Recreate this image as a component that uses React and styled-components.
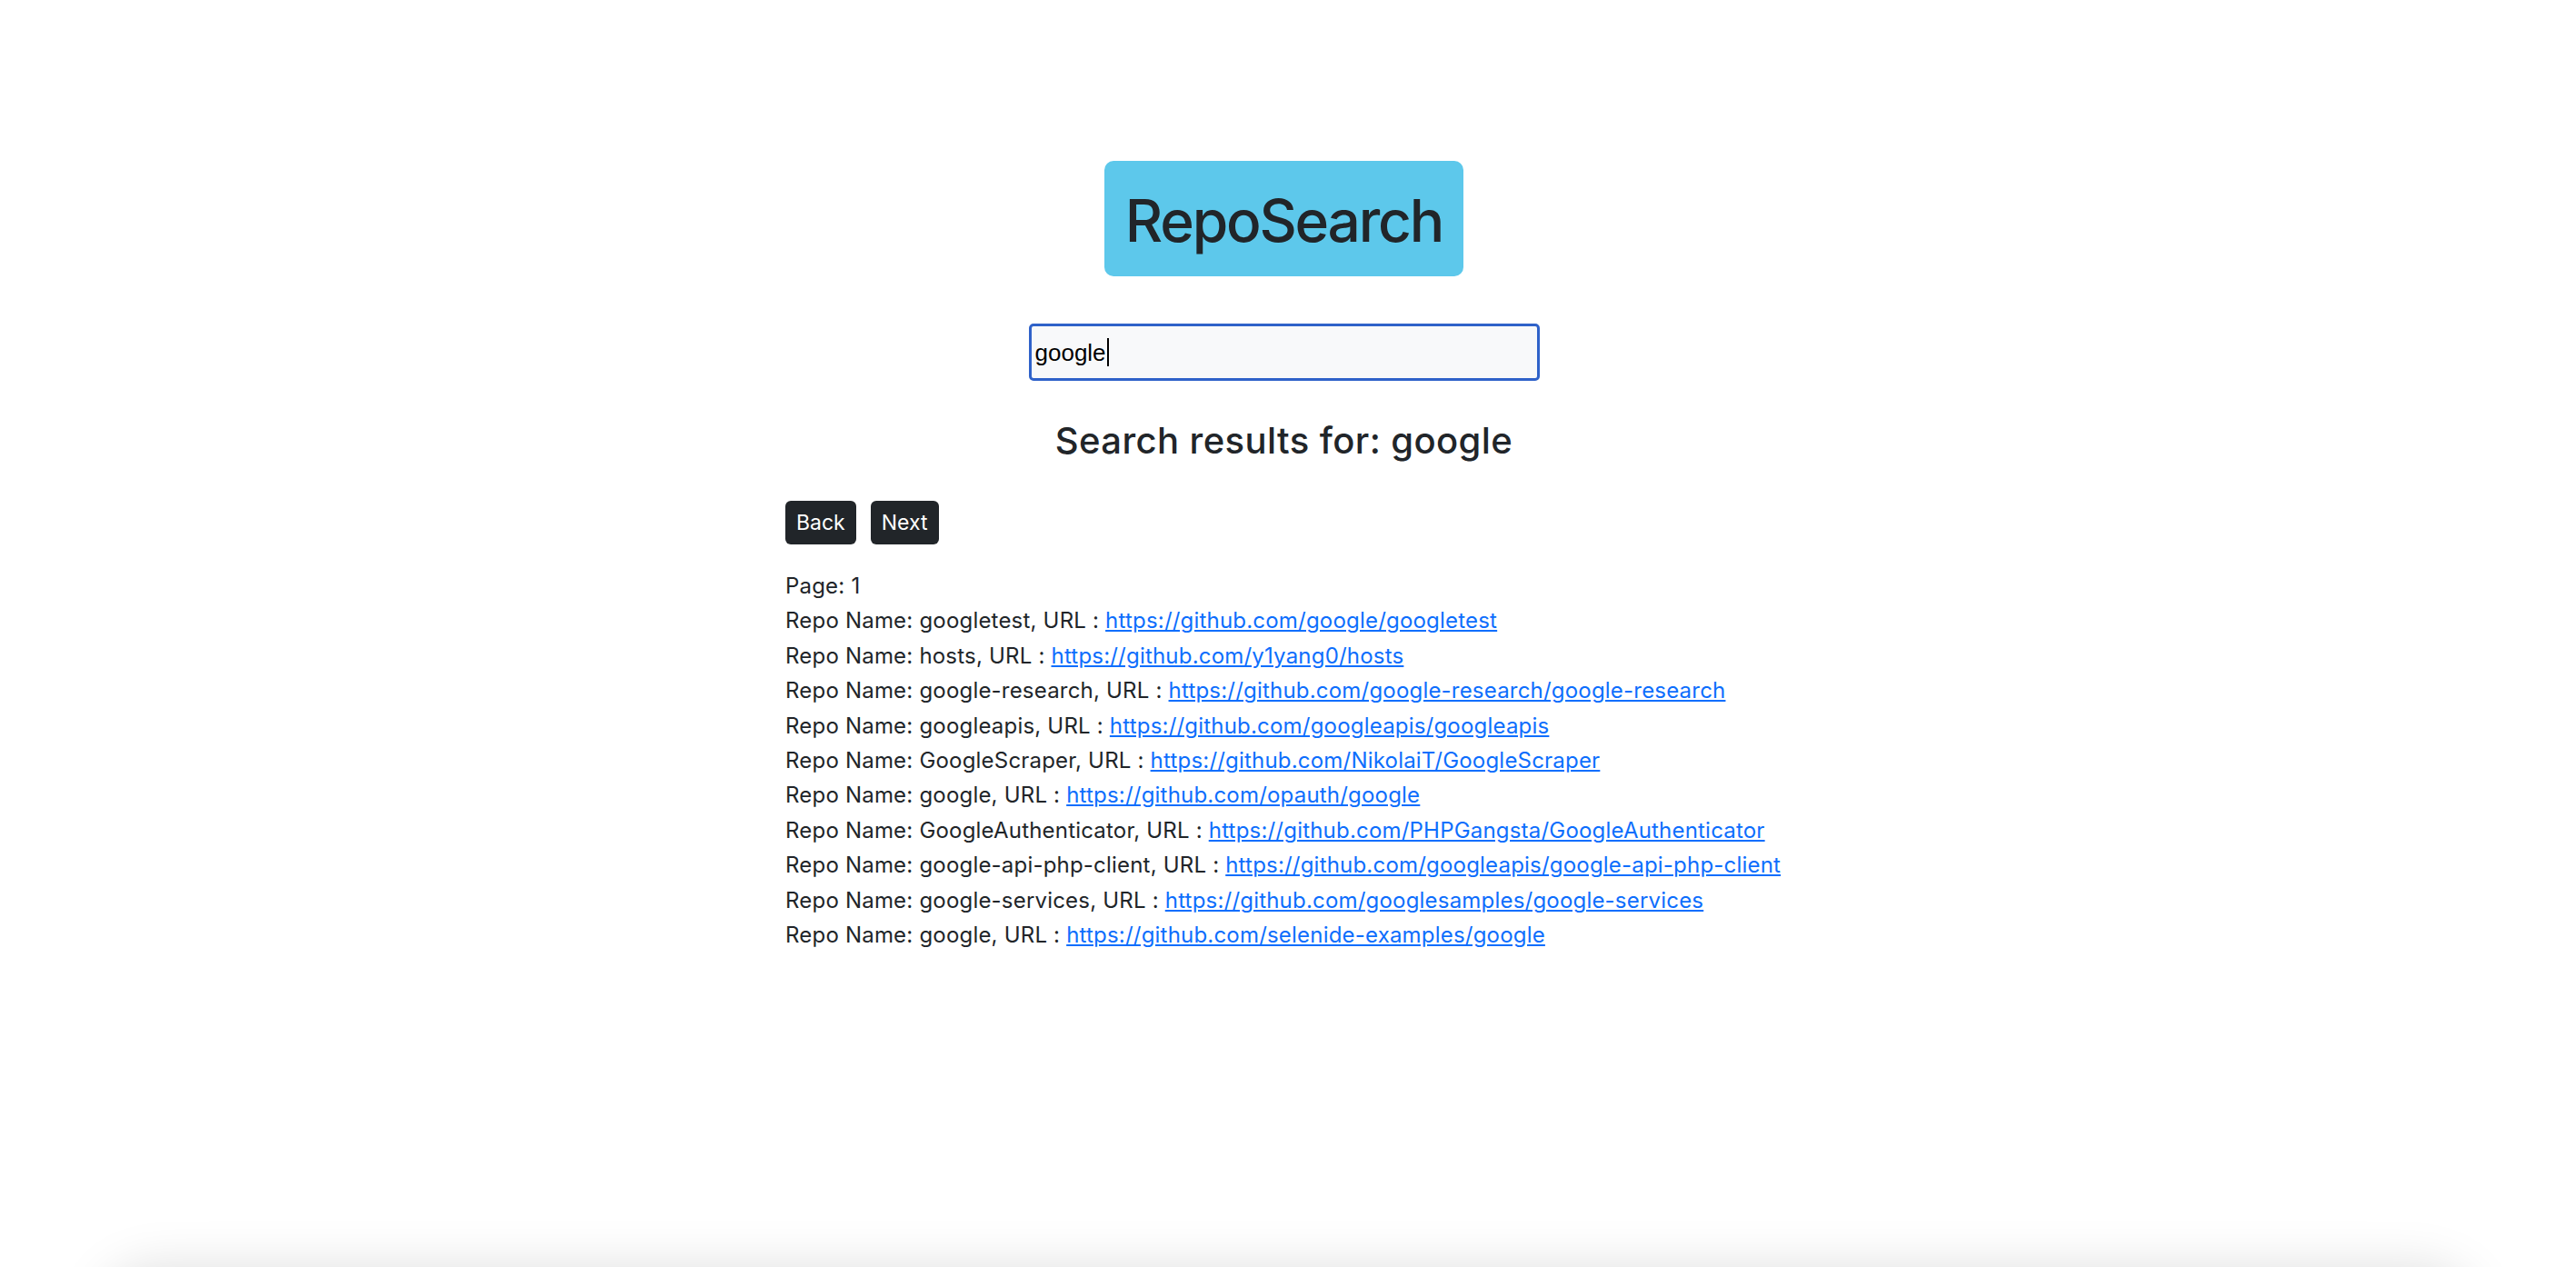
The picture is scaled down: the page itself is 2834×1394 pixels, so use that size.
import React from 'react';
import styled, { createGlobalStyle } from 'styled-components';

const GlobalStyle = createGlobalStyle`
  html, body {
    margin: 0;
    padding: 0;
    background: #ffffff;
  }
  body {
    font-family: Inter, "Noto Sans", "Liberation Sans", sans-serif;
    color: #212529;
    overflow: hidden;
  }
`;

const Page = styled.main`
  display: flex;
  flex-direction: column;
  align-items: center;
  padding: 177px 9px 0 0;
  min-height: 100vh;
  box-sizing: border-box;
`;

const TitleBox = styled.h1`
  margin: 0;
  width: 395px;
  box-sizing: border-box;
  padding: 27px 0 23px;
  background: #5dc8eb;
  border-radius: 10px;
  font-size: 64px;
  font-weight: 500;
  line-height: 77px;
  text-align: center;
  color: #212529;
  letter-spacing: -2.2px;
`;

const SearchField = styled.div`
  margin-top: 52px;
  width: 562px;
  height: 63px;
  box-sizing: border-box;
  display: flex;
  align-items: center;
  padding: 0 4px;
  background: #f8f9fa;
  border: 3px solid #2f62c9;
  border-radius: 5px;
  font-family: "Liberation Sans", Arial, sans-serif;
  font-size: 26px;
  line-height: 32px;
  color: #000000;
`;

const Caret = styled.span`
  display: inline-block;
  width: 2px;
  height: 31px;
  margin-left: 1px;
  background: #000000;
`;

const ResultsHeading = styled.h2`
  margin: 42px 0 0;
  font-size: 40px;
  font-weight: 500;
  line-height: 48px;
  letter-spacing: 0.4px;
  color: #212529;
`;

const Results = styled.section`
  width: 1097px;
  margin-top: 42px;
`;

const Pager = styled.div`
  display: flex;
  gap: 16px;
`;

const PagerButton = styled.button`
  font-family: inherit;
  font-size: 23px;
  line-height: 36px;
  padding: 6px 12px;
  border: none;
  border-radius: 6px;
  background: #212529;
  color: #ffffff;
  cursor: pointer;
`;

const List = styled.div`
  margin-top: 27px;
  font-size: 24px;
  line-height: 38.4px;
  letter-spacing: 0.2px;
`;

const Line = styled.div`
  white-space: nowrap;
`;

const RepoLink = styled.a`
  color: #0d6efd;
  text-decoration: underline;
  text-underline-offset: 2px;
`;

const repos = [
  ['googletest', 'https://github.com/google/googletest'],
  ['hosts', 'https://github.com/y1yang0/hosts'],
  ['google-research', 'https://github.com/google-research/google-research'],
  ['googleapis', 'https://github.com/googleapis/googleapis'],
  ['GoogleScraper', 'https://github.com/NikolaiT/GoogleScraper'],
  ['google', 'https://github.com/opauth/google'],
  ['GoogleAuthenticator', 'https://github.com/PHPGangsta/GoogleAuthenticator'],
  ['google-api-php-client', 'https://github.com/googleapis/google-api-php-client'],
  ['google-services', 'https://github.com/googlesamples/google-services'],
  ['google', 'https://github.com/selenide-examples/google'],
];

// shadow of something sitting just under the bottom of the window
const BottomShade = styled.div`
  position: fixed;
  left: 110px;
  right: 110px;
  top: 100%;
  height: 200px;
  border-radius: 60px;
  box-shadow: 0 0 55px 0 rgba(0, 0, 0, 0.13);
  pointer-events: none;
`;

export default function App() {
  return (
    <>
      <GlobalStyle />
      <Page>
        <TitleBox>RepoSearch</TitleBox>
        <SearchField>
          <span>google</span>
          <Caret />
        </SearchField>
        <ResultsHeading>Search results for: google</ResultsHeading>
        <Results>
          <Pager>
            <PagerButton>Back</PagerButton>
            <PagerButton>Next</PagerButton>
          </Pager>
          <List>
            <Line>Page: 1</Line>
            {repos.map(([name, url], i) => (
              <Line key={i}>
                Repo Name: {name}, URL : <RepoLink href={url}>{url}</RepoLink>
              </Line>
            ))}
          </List>
        </Results>
      </Page>
      <BottomShade />
    </>
  );
}
